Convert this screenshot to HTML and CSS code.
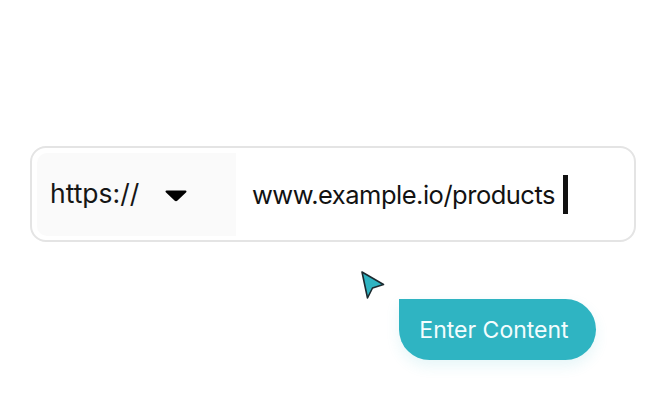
FILE: index.html
```html
<!DOCTYPE html>
<html lang="en">
<head>
  <meta charset="UTF-8" />
  <title>URL input</title>
  <link rel="stylesheet" href="styles.css">
</head>
<body>
  <div class="url-field">
    <div class="protocol">
      <span>https://</span>
      <svg class="caret" width="22" height="13" viewBox="0 0 22 13"><path d="M1.500 1.500h19a1 1 0 0 1 .7 1.700l-8.700 8.300a2.200 2.200 0 0 1-3 0L.8 3.200a1 1 0 0 1 .7-1.700z" fill="#000"/></svg>
    </div>
    <div class="address">
      <span>www.example.io/products</span>
      <span class="text-cursor"></span>
    </div>
  </div>
  <div class="actions">
    <svg class="pointer" width="26" height="30" viewBox="0 0 26 30"><path d="M2 2L23.500 14.500L12.500 18L7.500 28z" fill="#2fb4c2" stroke="#1d2a30" stroke-width="1.600" stroke-linejoin="round"/></svg>
    <button class="enter-btn">Enter Content</button>
  </div>
</body>
</html>
```

FILE: styles.css
```css
body {
  margin: 0;
  width: 667px;
  height: 400px;
  overflow: hidden;
  background: #fff;
  font-family: Inter, "Liberation Sans", sans-serif;
  padding-top: 146px;
  box-sizing: border-box;
}
.url-field {
  display: flex;
  box-sizing: border-box;
  width: 606px;
  height: 96px;
  margin-left: 30px;
  padding: 5px 5px 4px;
  border: 2px solid #e4e4e4;
  border-radius: 16px;
  background: #fff;
}
.protocol {
  display: flex;
  align-items: center;
  justify-content: space-between;
  box-sizing: border-box;
  width: 199px;
  padding: 0 49px 3px 13px;
  background: #fafafa;
  border-radius: 10px 0 0 10px;
  font-size: 26.500px;
  color: #161616;
}
.protocol .caret {
  margin-top: 5px;
}
.address {
  display: flex;
  align-items: center;
  gap: 8px;
  padding-left: 16px;
  font-size: 25.500px;
  letter-spacing: -0.5px;
  color: #121212;
}
.text-cursor {
  width: 5px;
  height: 39px;
  background: #121212;
}
.actions {
  position: relative;
  padding: 57px 0 0 399px;
}
.pointer {
  position: absolute;
  left: 360px;
  top: 28px;
}
.enter-btn {
  display: block;
  width: 197px;
  height: 61px;
  padding: 0 7px 0 0;
  border: none;
  border-radius: 0 31px 31px 31px;
  background: #2fb4c2;
  color: #f4fdfe;
  font-family: inherit;
  font-size: 23px;
  box-shadow: 0 6px 14px rgba(47, 180, 194, 0.12);
}
```
